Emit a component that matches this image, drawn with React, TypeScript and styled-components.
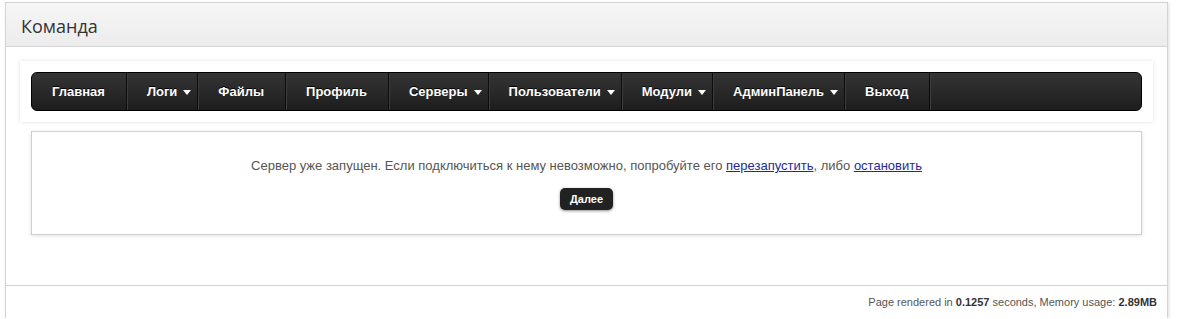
import styled, { createGlobalStyle } from "styled-components";

const GlobalStyle = createGlobalStyle`
  body {
    margin: 0;
    background: #ffffff;
    font-family: "Liberation Sans", Arial, sans-serif;
  }
`;

const Page = styled.div`
  padding: 2px 0 0 5px;
`;

const Panel = styled.div`
  width: 1161px;
  border: 1px solid #d4d4d4;
  border-bottom: none;
  box-shadow: 1px 1px 3px rgba(0, 0, 0, 0.12);
  background: #fff;
`;

const PanelHeader = styled.div`
  height: 44px;
  display: flex;
  align-items: center;
  padding: 3px 0 0 15px;
  box-sizing: border-box;
  background: linear-gradient(#f6f6f6, #ececec);
  border-bottom: 1px solid #d6d6d6;
`;

const Title = styled.h1`
  margin: 0;
  font-family: "Open Sans", "Liberation Sans", sans-serif;
  font-weight: 400;
  font-size: 18px;
  color: #333;
`;

const PanelBody = styled.div`
  padding: 14px 14px 50px 14px;
  display: flex;
  flex-direction: column;
  gap: 9px;
`;

const MenuWrap = styled.div`
  padding: 11px;
  background: #fff;
  box-shadow: 0 0 4px rgba(0, 0, 0, 0.13);
`;

const Nav = styled.nav`
  height: 37px;
  display: flex;
  background: linear-gradient(#353535, #1d1d1d);
  border: 1px solid #000;
  border-radius: 6px;
  overflow: hidden;
`;

const NavItem = styled.a<{ $first?: boolean; $drop?: boolean }>`
  display: flex;
  align-items: center;
  gap: 6px;
  padding: 0 ${(p) => (p.$drop ? "6px" : "21px")} 0 ${(p) => (p.$first ? "20px" : "20px")};
  color: #fff;
  font-weight: bold;
  font-size: 13px;
  text-shadow: 0 -1px 0 #000;
  text-decoration: none;
  border-right: 1px solid #0c0c0c;
  box-shadow: ${(p) => (p.$first ? "none" : "inset 1px 0 0 #3c3c3c")};
  cursor: pointer;
`;

const Caret = styled.span`
  width: 0;
  height: 0;
  border-left: 4.5px solid transparent;
  border-right: 4.5px solid transparent;
  border-top: 5px solid #fff;
  margin-top: 2px;
`;

const Spacer = styled.div`
  flex: 1;
  box-shadow: inset 1px 0 0 #3c3c3c;
`;

const Notice = styled.div`
  margin: 0 11px;
  padding: 26px 0 24px;
  border: 1px solid #cfcfcf;
  box-shadow: 0 1px 4px rgba(0, 0, 0, 0.12);
  display: flex;
  flex-direction: column;
  align-items: center;
  gap: 15px;
`;

const Message = styled.p`
  margin: 0;
  font-size: 13px;
  line-height: 15px;
  color: #555;
  a {
    color: #1f2a9e;
    text-decoration: underline;
  }
`;

const Button = styled.button`
  height: 22px;
  padding: 0 10px;
  border: none;
  border-radius: 5px;
  background: #222;
  color: #fff;
  font-family: "Liberation Sans", Arial, sans-serif;
  font-weight: bold;
  font-size: 11px;
  box-shadow: 0 1px 3px rgba(0, 0, 0, 0.45);
  cursor: pointer;
`;

const Footer = styled.div`
  border-top: 1px solid #d2d2d2;
  height: 32px;
  display: flex;
  align-items: center;
  justify-content: flex-end;
  padding-right: 10px;
  font-size: 11px;
  color: #555;
  b {
    color: #333;
  }
`;

const menu = [
  { label: "Главная" },
  { label: "Логи", drop: true },
  { label: "Файлы" },
  { label: "Профиль" },
  { label: "Серверы", drop: true },
  { label: "Пользователи", drop: true },
  { label: "Модули", drop: true },
  { label: "АдминПанель", drop: true },
  { label: "Выход" },
];

function App() {
  return (
    <Page>
      <GlobalStyle />
      <Panel>
        <PanelHeader>
          <Title>Команда</Title>
        </PanelHeader>
        <PanelBody>
          <MenuWrap>
            <Nav>
              {menu.map((item, index) => (
                <NavItem key={item.label} $first={index === 0} $drop={item.drop}>
                  {item.label}
                  {item.drop && <Caret />}
                </NavItem>
              ))}
              <Spacer />
            </Nav>
          </MenuWrap>
          <Notice>
            <Message>
              Сервер уже запущен. Если подключиться к нему невозможно, попробуйте его{" "}
              <a href="#">перезапустить</a>, либо <a href="#">остановить</a>
            </Message>
            <Button>Далее</Button>
          </Notice>
        </PanelBody>
        <Footer>
          Page rendered in&nbsp;<b>0.1257</b>&nbsp;seconds, Memory usage:&nbsp;<b>2.89MB</b>
        </Footer>
      </Panel>
    </Page>
  );
}

export default App;
